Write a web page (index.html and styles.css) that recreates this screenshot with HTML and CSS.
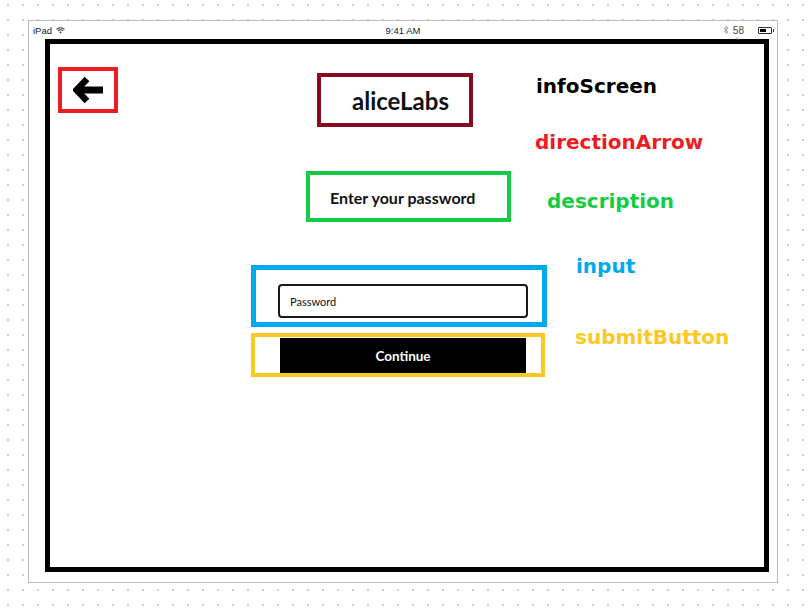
FILE: index.html
```html
<!DOCTYPE html>
<html>
<head>
  <title>aliceLabs - infoScreen</title>
  <link rel="stylesheet" href="styles.css">
</head>
<body>
  <div class="device">
    <!-- iPad status bar -->
    <div class="status-bar">
      <div class="status-left">
        <span>iPad</span>
        <svg class="wifi" width="9" height="7" viewBox="0 0 9 7">
          <path d="M0.5 2.4 A5.6 5.6 0 0 1 8.5 2.4" fill="none" stroke="#333" stroke-width="1.1"/>
          <path d="M2 3.9 A3.4 3.4 0 0 1 7 3.9" fill="none" stroke="#333" stroke-width="1.1"/>
          <path d="M3.4 5.3 A1.4 1.4 0 0 1 5.6 5.3 L4.5 6.6 Z" fill="#333"/>
        </svg>
      </div>
      <div class="status-time">9:41 AM</div>
      <div class="status-right">
        <svg class="bt" width="6" height="10" viewBox="0 0 6 10">
          <path d="M0.5 2.8 L5 7 L3 9 L3 1 L5 3 L0.5 7.2" fill="none" stroke="#999" stroke-width="0.9"/>
        </svg>
        <span class="level">58<small>%</small></span>
        <span class="battery"><span class="charge"></span></span>
      </div>
    </div>

    <div class="screen">
      <div class="row row-top">
        <div class="box back-box">
          <svg width="30" height="28" viewBox="0 0 30 28">
            <polyline points="14,3 3.5,14 14,25" fill="none" stroke="#000" stroke-width="6.5"/>
            <line x1="4" y1="14" x2="30" y2="14" stroke="#000" stroke-width="7"/>
          </svg>
        </div>
        <div class="box brand-box">aliceLabs</div>
        <div class="note note-info">infoScreen</div>
      </div>

      <div class="row">
        <div class="note note-arrow">directionArrow</div>
      </div>

      <div class="row row-desc">
        <div class="box desc-box">Enter your password</div>
        <div class="note note-desc">description</div>
      </div>

      <div class="row row-input">
        <div class="box input-box">
          <input class="password" type="password" placeholder="Password">
        </div>
        <div class="note note-input">input</div>
      </div>

      <div class="row row-submit">
        <div class="box submit-box">
          <button class="continue-btn">Continue</button>
        </div>
        <div class="note note-submit">submitButton</div>
      </div>
    </div>
  </div>
</body>
</html>
```

FILE: styles.css
```css
* {
  box-sizing: border-box;
}

body {
  margin: 0;
  width: 812px;
  height: 610px;
  overflow: hidden;
  font-family: Lato, "Open Sans", sans-serif;
  background-color: #ffffff;
  background-image: radial-gradient(circle at 1px 1px, #cdcdcd 0.9px, transparent 1.2px);
  background-size: 15px 15px;
  background-position: 7px 4px;
}

.device {
  margin: 20px 0 0 28px;
  width: 750px;
  height: 563px;
  border: 1px solid #bdb8bc;
  background-color: #ffffff;
}

/* Status bar */
.status-bar {
  height: 18px;
  padding: 0 4px;
  display: flex;
  align-items: center;
  justify-content: space-between;
  font-family: "Liberation Sans", Arial, sans-serif;
  font-size: 9.5px;
  color: #222222;
}

.status-left {
  display: flex;
  align-items: center;
  gap: 4px;
  width: 120px;
}

.status-right {
  width: 120px;
  display: flex;
  align-items: center;
  justify-content: flex-end;
  gap: 4px;
  padding-right: 1px;
}

.level {
  position: relative;
  font-size: 10px;
  color: #444444;
  margin-right: 10px;
}

.level small {
  position: absolute;
  left: 3px;
  top: 12px;
  font-size: 4px;
  line-height: 4px;
  color: #888888;
}

.battery {
  position: relative;
  display: inline-flex;
  width: 14px;
  height: 7px;
  border: 1px solid #333333;
  border-radius: 1px;
  padding: 1px;
}

.battery::after {
  content: "";
  position: absolute;
  right: -3px;
  top: 1px;
  width: 1px;
  height: 3px;
  background: #333333;
}

.charge {
  width: 58%;
  background: #000000;
}

/* Black app screen */
.screen {
  margin-left: 16px;
  width: 724px;
  height: 533px;
  border: 5px solid #000000;
  background-color: #ffffff;
}

.row {
  display: flex;
  align-items: flex-start;
}

.box {
  border: 4px solid;
}

.back-box {
  margin: 23px 0 0 8px;
  width: 60px;
  height: 46px;
  border-color: #ed1c24;
  display: flex;
  align-items: center;
  justify-content: center;
}

.brand-box {
  margin: 29px 0 0 199px;
  width: 156px;
  height: 54px;
  border-color: #850a22;
  padding-left: 31px;
  font-size: 24px;
  font-weight: 700;
  line-height: 48px;
  color: #111111;
}

.desc-box {
  margin-left: 256px;
  width: 205px;
  height: 51px;
  border-color: #14cc44;
  padding-left: 20px;
  font-size: 16px;
  font-weight: 700;
  line-height: 45px;
  color: #111111;
}

.input-box {
  margin-left: 201px;
  width: 296px;
  height: 62px;
  border: 5px solid #00a8ec;
  padding: 14px 0 0 22px;
}

.password {
  width: 250px;
  height: 34px;
  border: 2px solid #1a1a1a;
  border-radius: 4px;
  padding: 0 10px;
  font-family: Lato, sans-serif;
  font-size: 11px;
  outline: none;
}

.password::placeholder {
  color: #111111;
}

.submit-box {
  margin-left: 201px;
  width: 294px;
  height: 44px;
  border-color: #fdc823;
  padding: 1px 0 0 25px;
}

.continue-btn {
  display: block;
  width: 246px;
  height: 35px;
  border: none;
  background-color: #000000;
  color: #ffffff;
  font-family: Lato, sans-serif;
  font-size: 13.5px;
  font-weight: 700;
}

/* Annotation labels */
.note {
  font-family: "DejaVu Sans", Verdana, sans-serif;
  font-size: 20px;
  font-weight: bold;
  line-height: 24px;
}

.note-info {
  margin: 30px 0 0 63px;
  color: #000000;
}

.note-arrow {
  margin: 3px 0 0 485px;
  color: #ed1c24;
}

.row-desc {
  margin-top: 17px;
}

.note-desc {
  margin: 18px 0 0 36px;
  color: #14cc44;
}

.row-input {
  margin-top: 43px;
}

.note-input {
  margin: -11px 0 0 29px;
  color: #00a8ec;
}

.row-submit {
  margin-top: 6px;
}

.note-submit {
  margin: -8px 0 0 30px;
  color: #fdc823;
}
```
